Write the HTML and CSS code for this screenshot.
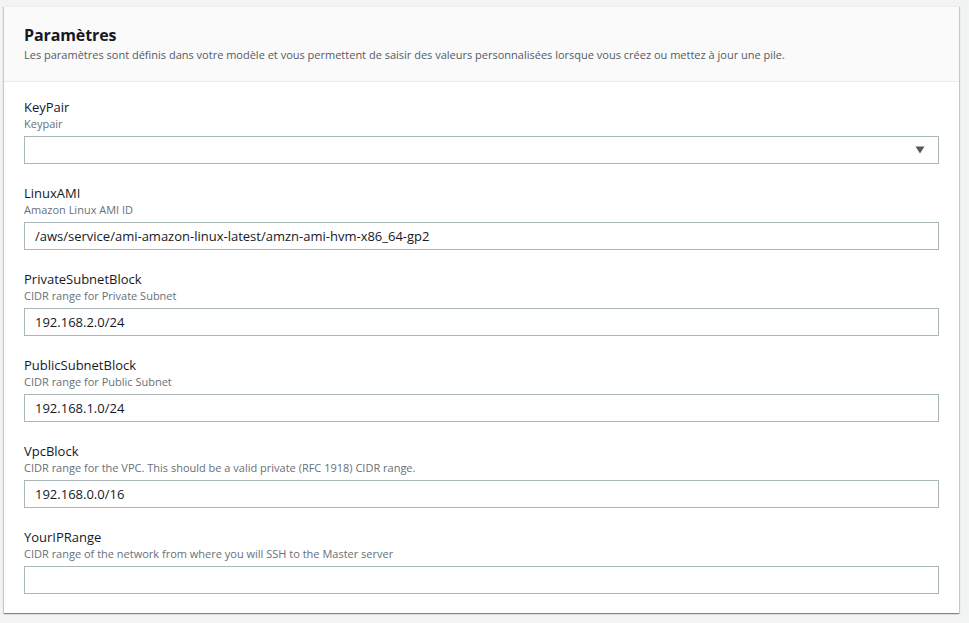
FILE: index.html
```html
<!DOCTYPE html>
<html lang="fr">
<head>
<meta charset="utf-8">
<link rel="stylesheet" href="styles.css">
</head>
<body>
<div class="page">
  <section class="card">
    <header class="card-header">
      <h2 class="title">Paramètres</h2>
      <p class="subtitle">Les paramètres sont définis dans votre modèle et vous permettent de saisir des valeurs personnalisées lorsque vous créez ou mettez à jour une pile.</p>
    </header>
    <div class="card-body">
      <div class="field">
        <div class="label">KeyPair</div>
        <div class="desc">Keypair</div>
        <div class="input select"><span class="value"></span><svg class="caret" width="10" height="8" viewBox="0 0 10 8"><path d="M0.5 0.5 H9.5 L5 7.5 Z" fill="#545b64"/></svg></div>
      </div>
      <div class="field">
        <div class="label">LinuxAMI</div>
        <div class="desc">Amazon Linux AMI ID</div>
        <div class="input"><span class="value">/aws/service/ami-amazon-linux-latest/amzn-ami-hvm-x86_64-gp2</span></div>
      </div>
      <div class="field">
        <div class="label">PrivateSubnetBlock</div>
        <div class="desc">CIDR range for Private Subnet</div>
        <div class="input"><span class="value">192.168.2.0/24</span></div>
      </div>
      <div class="field">
        <div class="label">PublicSubnetBlock</div>
        <div class="desc">CIDR range for Public Subnet</div>
        <div class="input"><span class="value">192.168.1.0/24</span></div>
      </div>
      <div class="field">
        <div class="label">VpcBlock</div>
        <div class="desc">CIDR range for the VPC. This should be a valid private (RFC 1918) CIDR range.</div>
        <div class="input"><span class="value">192.168.0.0/16</span></div>
      </div>
      <div class="field">
        <div class="label">YourIPRange</div>
        <div class="desc">CIDR range of the network from where you will SSH to the Master server</div>
        <div class="input"><span class="value"></span></div>
      </div>
    </div>
  </section>
</div>
</body>
</html>
```

FILE: styles.css
```css
html, body {
  margin: 0;
  padding: 0;
  background: #f2f3f3;
  font-family: "Open Sans", "Noto Sans", sans-serif;
  color: #16191f;
}
.page {
  padding: 6px 10px 10px 4px;
}
.card {
  background: #ffffff;
  border-top: 1px solid #eaeded;
  box-shadow: 0 1px 1px 0 rgba(0, 28, 36, 0.3), 1px 1px 1px 0 rgba(0, 28, 36, 0.15), -1px 1px 1px 0 rgba(0, 28, 36, 0.15);
}
.card-header {
  background: #fafafa;
  border-bottom: 1px solid #eaeded;
  padding: 17px 20px 18px 20px;
}
.title {
  margin: 0;
  font-size: 16px;
  line-height: 22px;
  font-weight: 700;
  letter-spacing: -0.1px;
  color: #16191f;
}
.subtitle {
  margin: 1px 0 0 0;
  font-size: 11px;
  line-height: 16px;
  color: #545b64;
}
.card-body {
  padding: 16px 20px 19px 20px;
  display: flex;
  flex-direction: column;
  gap: 20px;
}
.field {
  display: flex;
  flex-direction: column;
}
.label {
  font-size: 13px;
  line-height: 18px;
  color: #16191f;
}
.desc {
  font-size: 11px;
  line-height: 16px;
  color: #687078;
  margin-bottom: 4px;
}
.input {
  height: 28px;
  box-sizing: border-box;
  border: 1px solid #aab7b8;
  background: #ffffff;
  display: flex;
  align-items: center;
  padding: 0 12px 0 10px;
  font-size: 13px;
  color: #16191f;
}
.value {
  flex: 1;
}
.caret {
  display: block;
  margin-right: 1px;
}
```
